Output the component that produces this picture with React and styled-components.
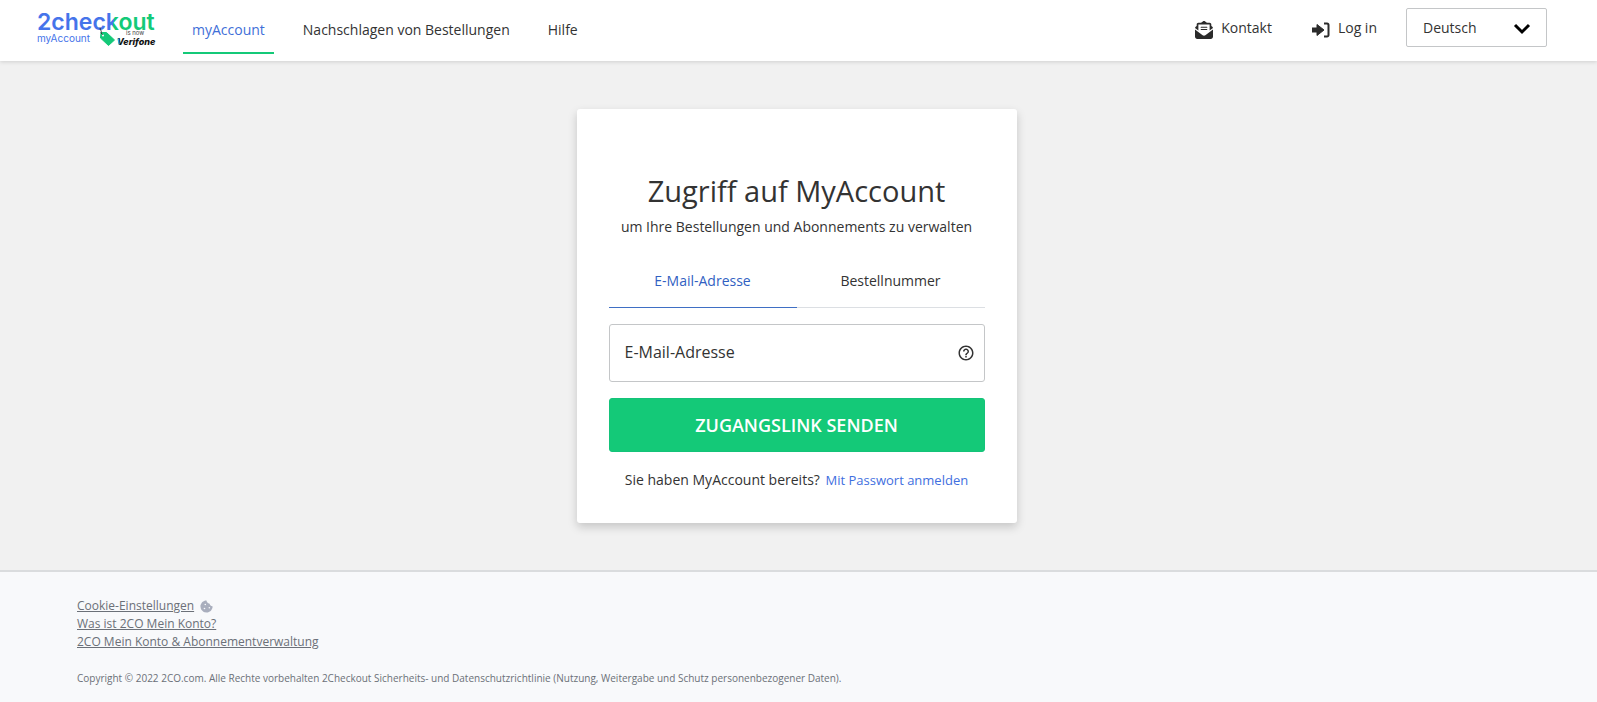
import React, { useState } from "react";
import styled, { createGlobalStyle } from "styled-components";
import { FaEnvelopeOpenText, FaCookieBite } from "react-icons/fa6";
import { MdHelpOutline } from "react-icons/md";

const GlobalStyle = createGlobalStyle`
  * {
    box-sizing: border-box;
  }

  body {
    margin: 0;
    background: #f1f1f1;
    color: #333;
    font-family: "Open Sans", sans-serif;
    font-size: 14px;
    line-height: 20px;
  }

  button, input, select {
    font-family: inherit;
    color: inherit;
  }
`;

const Page = styled.div`
  display: flex;
  flex-direction: column;
  min-height: 100vh;
`;

const Header = styled.header`
  display: flex;
  align-items: flex-start;
  justify-content: space-between;
  padding: 8px 50px 7px 36px;
  background: #fff;
  box-shadow: 0 1px 4px rgba(0, 0, 0, 0.14);
`;

const HeaderSide = styled.div`
  display: flex;
  align-items: flex-start;
`;

const LogoSvg = styled.svg`
  display: block;
  width: 124px;
  height: 44px;
  margin-right: 23px;
`;

const Nav = styled.nav`
  display: flex;
  gap: 20px;
`;

const NavLink = styled.a`
  padding: 12px 9px;
  border-bottom: 2px solid ${(props) => (props.$active ? "#14c978" : "transparent")};
  color: ${(props) => (props.$active ? "#3f6fd8" : "#333")};
  text-decoration: none;
`;

const HeaderLink = styled.a`
  display: flex;
  align-items: center;
  gap: 8px;
  height: 40px;
  margin-right: ${(props) => props.$space}px;
  color: #333;
  text-decoration: none;

  svg {
    margin-top: 4px;
    color: #2b2b2b;
  }
`;

const SelectWrapper = styled.div`
  position: relative;
`;

const LanguageSelect = styled.select`
  appearance: none;
  display: block;
  width: 141px;
  height: 39px;
  padding: 0 40px 0 16px;
  border: 1px solid #c4c6c8;
  border-radius: 2px;
  background: #fff;
  font-size: 14px;
`;

const Chevron = styled.svg`
  position: absolute;
  right: 16px;
  top: 15px;
  width: 18px;
  height: 12px;
  pointer-events: none;
`;

const Main = styled.main`
  display: flex;
  justify-content: center;
  padding: 48px 20px 47px 16px;
`;

const Card = styled.section`
  width: 100%;
  max-width: 440px;
  padding: 61px 32px 33px;
  border-radius: 3px;
  background: #fff;
  box-shadow: 0 4px 10px rgba(0, 0, 0, 0.18);
  text-align: center;
`;

const Title = styled.h1`
  margin: 0;
  font-size: 29px;
  font-weight: 400;
  line-height: 42px;
`;

const Subtitle = styled.p`
  margin: 5px 0 18px;
`;

const Tabs = styled.div`
  display: flex;
  margin-bottom: 16px;
`;

const Tab = styled.button`
  flex: 1;
  padding: 16px 0;
  border: 0;
  border-bottom: 1px solid ${(props) => (props.$active ? "#3f6fc4" : "#dcdfe3")};
  background: none;
  color: ${(props) => (props.$active ? "#315fc2" : "#333")};
  font-size: 14px;
  line-height: 20px;
  cursor: pointer;
`;

const Field = styled.div`
  position: relative;
  margin-bottom: 16px;
`;

const Input = styled.input`
  display: block;
  width: 100%;
  height: 58px;
  padding: 0 40px 2px 15px;
  border: 1px solid #c4c6c8;
  border-radius: 3px;
  background: #fff;
  font-size: 16px;

  &::placeholder {
    color: #333;
    opacity: 1;
  }
`;

const HelpIcon = styled(MdHelpOutline)`
  position: absolute;
  right: 10px;
  top: 20px;
  width: 18px;
  height: 18px;
`;

const SubmitButton = styled.button`
  display: block;
  width: 100%;
  height: 54px;
  border: 1px solid #14c37a;
  border-radius: 3px;
  background: #14c978;
  color: #fff;
  font-size: 18px;
  font-weight: 600;
  text-transform: uppercase;
  cursor: pointer;
`;

const LoginHint = styled.p`
  margin: 18px 0 0;
`;

const LoginLink = styled.a`
  margin-left: 2px;
  color: #3f6fe0;
  font-size: 13px;
  text-decoration: none;
`;

const Footer = styled.footer`
  flex: 1;
  padding: 25px 77px 14px;
  border-top: 2px solid #dadcde;
  background: #f8f9fb;
  color: #6b7078;
`;

const FooterLinks = styled.ul`
  margin: 0 0 19px;
  padding: 0;
  list-style: none;
`;

const FooterItem = styled.li`
  display: flex;
  align-items: center;
  gap: 6px;
  font-size: 12px;
  line-height: 18px;

  svg {
    color: #a9aebd;
  }
`;

const FooterLink = styled.a`
  color: inherit;
`;

const Copyright = styled.p`
  margin: 0;
  font-size: 10px;
  line-height: 16px;
`;

const footerLinks = [
    { title: "Cookie-Einstellungen", cookie: true },
    { title: "Was ist 2CO Mein Konto?" },
    { title: "2CO Mein Konto & Abonnementverwaltung" },
];

const Logo = () => (
    <LogoSvg viewBox="0 0 124 44" role="img" aria-label="2checkout myAccount">
        <defs>
            <linearGradient id="brand" gradientUnits="userSpaceOnUse" x1="0" y1="0" x2="120" y2="6">
                <stop offset="0.65" stopColor="#4574ea" />
                <stop offset="0.65" stopColor="#14c978" />
            </linearGradient>
        </defs>
        <text x="1" y="22" fontFamily="Inter, sans-serif" fontWeight="600" fontSize="23" fill="url(#brand)">2checkout</text>
        <text x="1" y="34" fontFamily="Inter, sans-serif" fontSize="10" fill="#4574ea">myAccount</text>
        <path d="M65 24.500l5.500 0 8 7.500-6 5.500-8-7.500z" fill="#14c978" stroke="#14c978" strokeLinejoin="round" />
        <path d="M64 19.500c0 3 2 3 1 5.500l2 2" fill="none" stroke="#333" />
        <circle cx="67" cy="27.500" r="1" fill="#fff" />
        <text x="90" y="27" fontFamily="Inter, sans-serif" fontSize="6" fill="#444">is now</text>
        <text x="81" y="37" fontFamily="Inter, sans-serif" fontWeight="800" fontStyle="italic" fontSize="9" fill="#111">Verifone</text>
        <path d="M81.500 30.500h1.500l.8 6h-1.300z" fill="#2fa8e0" />
    </LogoSvg>
);

const LoginIcon = () => (
    <svg width="18" height="18" viewBox="0 0 18 18">
        <path d="M0 7h5V3.500l7 5.500-7 5.500V11H0z" fill="currentColor" stroke="currentColor" strokeLinejoin="round" />
        <path d="M12 2.500h3a1.500 1.500 0 0 1 1.500 1.500v10a1.500 1.500 0 0 1-1.500 1.500h-3" fill="none" stroke="currentColor" strokeWidth="2" />
    </svg>
);

const App = () => {
    const [tab, setTab] = useState("E-Mail-Adresse");

    return (
        <Page>
            <GlobalStyle />
            <Header>
                <HeaderSide>
                    <Logo />
                    <Nav>
                        <NavLink href="#" $active>myAccount</NavLink>
                        <NavLink href="#">Nachschlagen von Bestellungen</NavLink>
                        <NavLink href="#">Hilfe</NavLink>
                    </Nav>
                </HeaderSide>
                <HeaderSide>
                    <HeaderLink href="#" $space={40}>
                        <FaEnvelopeOpenText size={18} />
                        Kontakt
                    </HeaderLink>
                    <HeaderLink href="#" $space={29}>
                        <LoginIcon />
                        Log in
                    </HeaderLink>
                    <SelectWrapper>
                        <LanguageSelect aria-label="Sprache" defaultValue="Deutsch">
                            <option>Deutsch</option>
                            <option>English</option>
                        </LanguageSelect>
                        <Chevron viewBox="0 0 18 12">
                            <path d="M2 2l7 7 7-7" fill="none" stroke="#000" strokeWidth="3" />
                        </Chevron>
                    </SelectWrapper>
                </HeaderSide>
            </Header>
            <Main>
                <Card>
                    <Title>Zugriff auf MyAccount</Title>
                    <Subtitle>um Ihre Bestellungen und Abonnements zu verwalten</Subtitle>
                    <Tabs>
                        {["E-Mail-Adresse", "Bestellnummer"].map((name) => (
                            <Tab key={name} type="button" $active={tab === name} onClick={() => setTab(name)}>
                                {name}
                            </Tab>
                        ))}
                    </Tabs>
                    <Field>
                        <Input aria-label={tab} placeholder={tab} />
                        <HelpIcon />
                    </Field>
                    <SubmitButton type="submit">Zugangslink senden</SubmitButton>
                    <LoginHint>
                        Sie haben MyAccount bereits? <LoginLink href="#">Mit Passwort anmelden</LoginLink>
                    </LoginHint>
                </Card>
            </Main>
            <Footer>
                <FooterLinks>
                    {footerLinks.map((link) => (
                        <FooterItem key={link.title}>
                            <FooterLink href="#">{link.title}</FooterLink>
                            {link.cookie && <FaCookieBite size={13} />}
                        </FooterItem>
                    ))}
                </FooterLinks>
                <Copyright>
                    Copyright © 2022 2CO.com. Alle Rechte vorbehalten 2Checkout Sicherheits- und
                    Datenschutzrichtlinie (Nutzung, Weitergabe und Schutz personenbezogener Daten).
                </Copyright>
            </Footer>
        </Page>
    );
};

export default App;
